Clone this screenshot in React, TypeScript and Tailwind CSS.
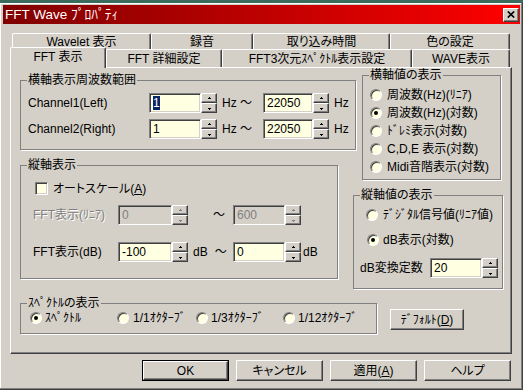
import React from "react";

const raised =
  "border border-t-white border-l-white border-b-[#404040] border-r-[#404040] shadow-[inset_-1px_-1px_0_#808080]";
const sunken =
  "border border-t-[#808080] border-l-[#808080] border-b-white border-r-white shadow-[inset_1px_1px_0_#404040,inset_-1px_-1px_0_#d4d0c8]";

function Arrow({ up, color }: { up?: boolean; color: string }) {
  return (
    <svg width="5" height="3" viewBox="0 0 5 3" shapeRendering="crispEdges">
      {up ? (
        <>
          <rect x="2" y="0" width="1" height="1" fill={color} />
          <rect x="1" y="1" width="3" height="1" fill={color} />
        </>
      ) : (
        <>
          <rect x="1" y="1" width="3" height="1" fill={color} />
          <rect x="2" y="2" width="1" height="1" fill={color} />
        </>
      )}
    </svg>
  );
}

function Spin({ disabled }: { disabled?: boolean }) {
  const c = disabled ? "#808080" : "#000";
  return (
    <div className="flex h-[20px] w-[16px] shrink-0 flex-col">
      <div className={`flex h-[10px] items-center justify-center bg-[#d4d0c8] ${raised}`}>
        <Arrow up color={c} />
      </div>
      <div className={`flex h-[10px] items-center justify-center bg-[#d4d0c8] ${raised}`}>
        <Arrow color={c} />
      </div>
    </div>
  );
}

function Field({
  value,
  className,
  disabled,
  selected,
}: {
  value: string;
  className: string;
  disabled?: boolean;
  selected?: boolean;
}) {
  return (
    <div
      className={`flex h-[20px] shrink-0 items-center pl-[3px] ${sunken} ${
        disabled ? "bg-[#d4d0c8] text-[#808080]" : "bg-[#ffffe1]"
      } ${className}`}
    >
      {selected ? <span className="bg-[#0a246a] text-white">{value}</span> : value}
    </div>
  );
}

function Radio({ checked }: { checked?: boolean }) {
  return (
    <span className="flex h-[12px] w-[12px] shrink-0 items-center justify-center rounded-full border border-t-[#808080] border-l-[#808080] border-b-white border-r-white bg-[#ffffe1] shadow-[inset_1px_1px_0_#404040]">
      {checked && <span className="h-[4px] w-[4px] rounded-full bg-black" />}
    </span>
  );
}

function Group({
  title,
  className,
  children,
}: {
  title: React.ReactNode;
  className: string;
  children?: React.ReactNode;
}) {
  return (
    <fieldset className={`min-w-0 border border-[#808080] shadow-[1px_1px_0_#fff] ${className}`}>
      <legend className="ml-[6px] px-[1px] leading-[13px]">{title}</legend>
      {children}
    </fieldset>
  );
}

function Btn({ children, def }: { children: React.ReactNode; def?: boolean }) {
  if (def) {
    return (
      <div className="h-[21px] w-[87px] border border-black">
        <div className={`flex h-full w-full items-center justify-center bg-[#d4d0c8] ${raised}`}>{children}</div>
      </div>
    );
  }
  return (
    <div className={`flex h-[21px] w-[87px] items-center justify-center bg-[#d4d0c8] ${raised}`}>{children}</div>
  );
}

const backTab =
  "flex h-[16px] justify-center pt-[1px] rounded-t-[2px] border-t border-l border-r border-t-white border-l-white border-r-[#404040] shadow-[inset_-1px_0_0_#808080]";
const frontTab =
  "flex h-[18px] justify-center pt-[2px] rounded-t-[2px] border-t border-l border-r border-t-white border-l-white border-r-[#404040] shadow-[inset_-1px_0_0_#808080]";

export default function App() {
  return (
    <div className="h-[390px] w-[523px] overflow-hidden bg-[#3a6b5c] font-['Liberation_Sans','Noto_Sans_CJK_JP',sans-serif] text-[12px] leading-[14px] text-black [font-feature-settings:'palt']">
      <div className="mt-[3px] h-[387px] border-r border-b border-r-[#404040] border-b-[#404040] bg-[#d4d0c8] pt-[2px] pr-[2px] pl-[3px] shadow-[inset_-1px_-1px_0_#808080,inset_1px_1px_0_#fff]">
        {/* Title bar */}
        <div className="flex h-[19px] items-center bg-linear-to-r from-[#800000] to-[#ff0000] pl-[2px]">
          <span className="text-[13.5px] leading-[19px] text-white">FFT Wave ﾌﾟﾛﾊﾟﾃｨ</span>
          <div className={`mr-[1px] ml-auto flex h-[14px] w-[16px] items-center justify-center bg-[#d4d0c8] ${raised}`}>
            <svg width="8" height="7" viewBox="0 0 8 7">
              <path d="M0.8 0.5L7.2 6.5M7.2 0.5L0.8 6.5" stroke="#000" strokeWidth="1.7" />
            </svg>
          </div>
        </div>

        {/* Body */}
        <div className="pt-[9px] pl-[7px]">
          {/* Tabs */}
          <div className="w-[502px]">
            <div className="flex h-[16px] pl-[2px]">
              <div className={`${backTab} w-[139px]`}>Wavelet 表示</div>
              <div className={`${backTab} w-[102px]`}>録音</div>
              <div className={`${backTab} w-[137px]`}>取り込み時間</div>
              <div className={`${backTab} w-[120px]`}>色の設定</div>
            </div>
            <div className="flex h-[18px] items-start">
              <div className="relative z-10 -mt-[2px] flex h-[21px] w-[96px] justify-center rounded-t-[2px] border-t border-l border-r border-t-white border-l-white border-r-[#404040] bg-[#d4d0c8] pt-[2px] shadow-[inset_-1px_0_0_#808080]">
                FFT 表示
              </div>
              <div className={`${frontTab} w-[116px]`}>FFT 詳細設定</div>
              <div className={`${frontTab} w-[190px]`}>FFT3次元ｽﾍﾟｸﾄﾙ表示設定</div>
              <div className={`${frontTab} w-[98px]`}>WAVE表示</div>
            </div>

            {/* Panel */}
            <div className="h-[287px] w-[502px] border border-t-white border-l-white border-b-[#404040] border-r-[#404040] shadow-[inset_-1px_-1px_0_#808080]">
              <div className="flex">
                {/* Left column */}
                <div className="ml-[9px] flex w-[336px] shrink-0 flex-col">
                  <Group title="横軸表示周波数範囲" className="mt-[6px] h-[76px] w-[336px]">
                    <div className="flex flex-col gap-[6px] pt-[6px] pl-[7px]">
                      <div className="flex h-[20px] items-center">
                        <span className="w-[121px] shrink-0">Channel1(Left)</span>
                        <Field value="1" selected className="w-[52px]" />
                        <Spin />
                        <span className="ml-[5px] w-[41px] shrink-0">Hz ～</span>
                        <Field value="22050" className="w-[50px]" />
                        <Spin />
                        <span className="ml-[5px]">Hz</span>
                      </div>
                      <div className="flex h-[20px] items-center">
                        <span className="w-[121px] shrink-0">Channel2(Right)</span>
                        <Field value="1" className="w-[52px]" />
                        <Spin />
                        <span className="ml-[5px] w-[41px] shrink-0">Hz ～</span>
                        <Field value="22050" className="w-[50px]" />
                        <Spin />
                        <span className="ml-[5px]">Hz</span>
                      </div>
                    </div>
                  </Group>

                  <Group title="縦軸表示" className="mt-[9px] h-[120px] w-[318px]">
                    <div className="flex flex-col">
                      <div className="mt-[10px] flex h-[13px] items-center pl-[14px]">
                        <span className={`h-[13px] w-[13px] shrink-0 bg-[#ffffe1] ${sunken}`} />
                        <span className="ml-[5px]">
                          オートスケール(<span className="underline">A</span>)
                        </span>
                      </div>
                      <div className="mt-[10px] flex h-[20px] items-center pl-[12px]">
                        <span className="w-[85px] shrink-0 text-[#808080] [text-shadow:1px_1px_0_#fff]">FFT表示(ﾘﾆｱ)</span>
                        <Field value="0" disabled className="w-[54px]" />
                        <Spin disabled />
                        <span className="flex w-[45px] shrink-0">
                          <span className="ml-[25px]">～</span>
                        </span>
                        <Field value="600" disabled className="w-[52px]" />
                        <Spin disabled />
                      </div>
                      <div className="mt-[17px] flex h-[20px] items-center pl-[12px]">
                        <span className="w-[85px] shrink-0">FFT表示(dB)</span>
                        <Field value="-100" className="w-[54px]" />
                        <Spin />
                        <span className="flex w-[45px] shrink-0">
                          <span className="ml-[5px]">dB</span>
                          <span className="ml-[7px]">～</span>
                        </span>
                        <Field value="0" className="w-[52px]" />
                        <Spin />
                        <span className="ml-[2px]">dB</span>
                      </div>
                    </div>
                  </Group>
                </div>

                {/* Right column */}
                <div className="-ml-[3px] flex flex-col">
                  <Group title="横軸値の表示" className="mt-[1px] ml-[9px] h-[111px] w-[139px]">
                    <div className="flex flex-col pt-[4px] pl-[7px]">
                      {[
                        ["周波数(Hz)(ﾘﾆｱ)", false],
                        ["周波数(Hz)(対数)", true],
                        ["ﾄﾞﾚﾐ表示(対数)", false],
                        ["C,D,E 表示(対数)", false],
                        ["Midi音階表示(対数)", false],
                      ].map(([t, c]) => (
                        <div key={t as string} className="flex h-[18px] items-center">
                          <Radio checked={c as boolean} />
                          <span className="ml-[5px] whitespace-nowrap">{t as string}</span>
                        </div>
                      ))}
                    </div>
                  </Group>

                  <Group title="縦軸値の表示" className="mt-[9px] h-[100px] w-[150px]">
                    <div className="flex flex-col">
                      <div className="mt-[4px] flex h-[18px] items-center pl-[12px]">
                        <Radio />
                        <span className="ml-[5px] whitespace-nowrap">ﾃﾞｼﾞﾀﾙ信号値(ﾘﾆｱ値)</span>
                      </div>
                      <div className="mt-[7px] flex h-[18px] items-center pl-[13px]">
                        <Radio checked />
                        <span className="ml-[4px] whitespace-nowrap">dB表示(対数)</span>
                      </div>
                      <div className="mt-[9px] flex h-[20px] items-center pl-[6px]">
                        <span className="w-[70px] shrink-0">dB変換定数</span>
                        <Field value="20" className="w-[52px]" />
                        <Spin />
                      </div>
                    </div>
                  </Group>
                </div>
              </div>

              {/* Bottom row */}
              <div className="mt-[8px] ml-[9px] flex items-start">
                <Group title="ｽﾍﾟｸﾄﾙの表示" className="h-[37px] w-[357px]">
                  <div className="flex h-[16px] items-center pl-[9px]">
                    <div className="flex w-[87px] shrink-0 items-center">
                      <Radio checked />
                      <span className="ml-[3px]">ｽﾍﾟｸﾄﾙ</span>
                    </div>
                    <div className="flex w-[79px] shrink-0 items-center">
                      <Radio />
                      <span className="ml-[4px]">1/1ｵｸﾀｰﾌﾞ</span>
                    </div>
                    <div className="flex w-[87px] shrink-0 items-center">
                      <Radio />
                      <span className="ml-[3px]">1/3ｵｸﾀｰﾌﾞ</span>
                    </div>
                    <div className="flex items-center">
                      <Radio />
                      <span className="ml-[3px] whitespace-nowrap">1/12ｵｸﾀｰﾌﾞ</span>
                    </div>
                  </div>
                </Group>
                <div className={`mt-[12px] ml-[13px] flex h-[21px] w-[74px] items-center justify-center bg-[#d4d0c8] ${raised}`}>
                  ﾃﾞﾌｫﾙﾄ(<span className="underline">D</span>)
                </div>
              </div>
            </div>
          </div>

          {/* Dialog buttons */}
          <div className="mt-[6px] flex w-[501px] justify-end gap-[7px]">
            <Btn def>OK</Btn>
            <Btn>キャンセル</Btn>
            <Btn>
              適用(<span className="underline">A</span>)
            </Btn>
            <Btn>ヘルプ</Btn>
          </div>
        </div>
      </div>
    </div>
  );
}
